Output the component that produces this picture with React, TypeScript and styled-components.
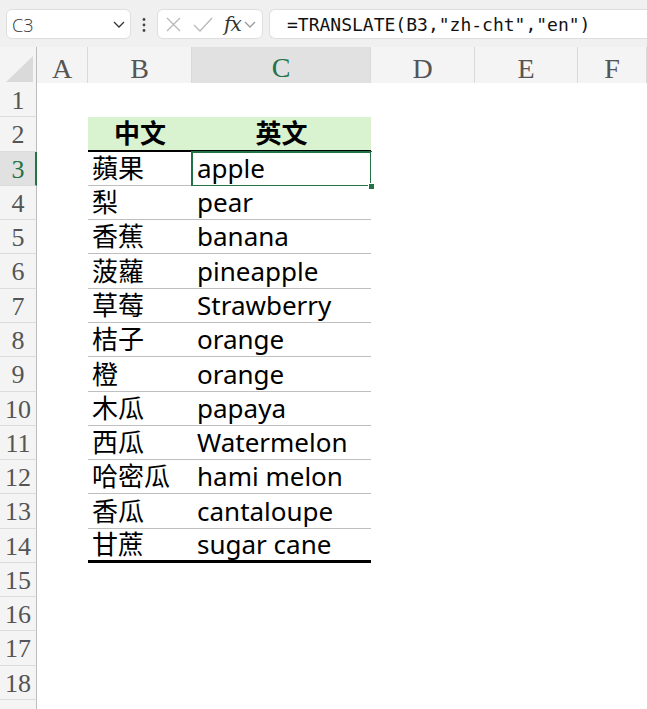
import React from "react";
import styled, { createGlobalStyle, css } from "styled-components";

const Global = createGlobalStyle`
  html, body { margin: 0; padding: 0; background: #ffffff; }
  body { overflow: hidden; }
`;

const GREEN = "#217346";
const COLS = ["37px", "51px", "104px", "179px", "104px", "103px", "69px"].join(" ");

const Page = styled.div`
  width: 647px;
  height: 709px;
  overflow: hidden;
  background: #ffffff;
  display: flex;
  flex-direction: column;
`;

const FormulaBar = styled.div`
  height: 47px;
  flex: none;
  box-sizing: border-box;
  background: #f0f0f0;
  padding: 9px 0 8px 6px;
  display: flex;
  align-items: stretch;
`;

const Box = styled.div`
  box-sizing: border-box;
  height: 30px;
  background: #ffffff;
  border: 1px solid #dedede;
  border-radius: 6px;
  display: flex;
  align-items: center;
`;

const NameBox = styled(Box)`
  width: 125px;
  padding: 1px 5px 0 5px;
  justify-content: space-between;
  font-family: "Open Sans", "Noto Sans", sans-serif;
  font-weight: 300;
  font-size: 18px;
  color: #333333;
`;

const Kebab = styled.div`
  width: 26px;
  display: flex;
  align-items: center;
  justify-content: center;
  padding-top: 2px;
`;

const FnBox = styled(Box)`
  width: 106px;
  padding: 0 4px 0 8px;
  gap: 12px;
`;

const Fx = styled.span`
  font-family: "DejaVu Serif", "Liberation Serif", serif;
  font-style: italic;
  font-size: 20px;
  color: #333333;
  margin-left: -1px;
  letter-spacing: -1px;
`;

const FxChevron = styled.span`
  margin-left: -9px;
  display: flex;
`;

const FormulaInput = styled(Box)`
  flex: 1;
  margin-left: 6px;
  border-right: none;
  border-top-right-radius: 0;
  border-bottom-right-radius: 0;
  padding-left: 17px;
  font-family: "DejaVu Sans Mono", "Liberation Mono", monospace;
  font-size: 18px;
  color: #111111;
  white-space: nowrap;
`;

const Sheet = styled.div`
  display: flex;
  flex-direction: column;
`;

const GridRow = styled.div<{ $h: number }>`
  display: grid;
  grid-template-columns: ${COLS};
  height: ${(p) => p.$h}px;
  flex: none;
`;

const headerText = css`
  font-family: "Liberation Serif", "DejaVu Serif", serif;
  color: #555555;
`;

const Corner = styled.div`
  box-sizing: border-box;
  background: #f4f4f4;
  border-right: 1px solid #bdbdbd;
  border-bottom: 1px solid #bdbdbd;
  display: flex;
  align-items: flex-end;
  justify-content: flex-end;
  padding: 0 3px 3px 0;
`;

const ColHeader = styled.div<{ $active?: boolean }>`
  ${headerText};
  box-sizing: border-box;
  font-size: 28px;
  background: ${(p) => (p.$active ? "#e1e1e1" : "#f4f4f4")};
  color: ${(p) => (p.$active ? GREEN : "#555555")};
  border-right: 1px solid #d9d9d9;
  border-bottom: ${(p) => (p.$active ? `2px solid ${GREEN}` : "1px solid #bdbdbd")};
  display: flex;
  align-items: center;
  justify-content: center;
  padding-top: ${(p) => (p.$active ? "5px" : "6px")};
  &:last-child { border-right: none; }
`;

const RowHeader = styled.div<{ $active?: boolean }>`
  ${headerText};
  box-sizing: border-box;
  font-size: 26px;
  background: ${(p) => (p.$active ? "#e1e1e1" : "#f4f4f4")};
  color: ${(p) => (p.$active ? GREEN : "#555555")};
  border-right: ${(p) => (p.$active ? `2px solid ${GREEN}` : "1px solid #bdbdbd")};
  border-bottom: 1px solid #dcdcdc;
  display: flex;
  align-items: center;
  justify-content: center;
  padding-left: ${(p) => (p.$active ? "1px" : "0")};
  padding-top: 2px;
`;

type Edge = "none" | "thin" | "head" | "end";
const edges: Record<Edge, string> = {
  none: "none",
  thin: "1px solid #bfbfbf",
  head: "2px solid #000000",
  end: "3px solid #000000",
};

const Cell = styled.div<{ $edge?: Edge; $head?: boolean; $selected?: boolean; $pad?: number }>`
  position: relative;
  box-sizing: border-box;
  min-width: 0;
  background: ${(p) => (p.$head ? "#d9f2d0" : "#ffffff")};
  border-bottom: ${(p) => edges[p.$edge ?? "none"]};
  font-family: "Noto Sans", "Noto Sans CJK TC", sans-serif;
  font-size: 26px;
  font-weight: ${(p) => (p.$head ? 700 : 400)};
  color: #000000;
  white-space: nowrap;
  display: flex;
  align-items: center;
  justify-content: ${(p) => (p.$head ? "center" : "flex-start")};
  padding-left: ${(p) => (p.$head ? 0 : p.$pad ?? 4)}px;
  padding-bottom: 1px;
  line-height: 1;
  ${(p) =>
    p.$selected &&
    css`
      &::after {
        content: "";
        position: absolute;
        left: -1px;
        right: -1px;
        top: -1px;
        bottom: -2px;
        border: 2px solid ${GREEN};
        pointer-events: none;
      }
      &::before {
        content: "";
        position: absolute;
        right: -4px;
        bottom: -5px;
        width: 5px;
        height: 5px;
        background: ${GREEN};
        border: 1px solid #ffffff;
        z-index: 2;
      }
    `}
`;

const Chevron = ({ color = "#333" }: { color?: string }) => (
  <svg width="12" height="7" viewBox="0 0 12 7">
    <polyline points="1,1 6,6 11,1" fill="none" stroke={color} strokeWidth="1.3" />
  </svg>
);

const columns = ["A", "B", "C", "D", "E", "F", ""];

const data: [string, string][] = [
  ["蘋果", "apple"],
  ["梨", "pear"],
  ["香蕉", "banana"],
  ["菠蘿", "pineapple"],
  ["草莓", "Strawberry"],
  ["桔子", "orange"],
  ["橙", "orange"],
  ["木瓜", "papaya"],
  ["西瓜", "Watermelon"],
  ["哈密瓜", "hami melon"],
  ["香瓜", "cantaloupe"],
  ["甘蔗", "sugar cane"],
];

const boundary = (i: number) => Math.round(83 + 34.28 * i);

export default function App() {
  const rows = Array.from({ length: 19 }, (_, k) => k + 1);
  return (
    <>
      <Global />
      <Page>
        <FormulaBar>
          <NameBox>
            <span>C3</span>
            <Chevron />
          </NameBox>
          <Kebab>
            <svg width="4" height="16" viewBox="0 0 4 16">
              <circle cx="2" cy="2.5" r="1.4" fill="#444" />
              <circle cx="2" cy="8" r="1.4" fill="#444" />
              <circle cx="2" cy="13.5" r="1.4" fill="#444" />
            </svg>
          </Kebab>
          <FnBox>
            <svg width="15" height="15" viewBox="0 0 15 15">
              <path d="M1 1 L14 14 M14 1 L1 14" stroke="#b8b8b8" strokeWidth="1.3" fill="none" />
            </svg>
            <svg width="20" height="15" viewBox="0 0 20 15">
              <polyline points="1,8 7,14 19,1" stroke="#b8b8b8" strokeWidth="1.3" fill="none" />
            </svg>
            <Fx>fx</Fx>
            <FxChevron>
              <Chevron color="#999" />
            </FxChevron>
          </FnBox>
          <FormulaInput>=TRANSLATE(B3,"zh-cht","en")</FormulaInput>
        </FormulaBar>
        <Sheet>
          <GridRow $h={36}>
            <Corner>
              <svg width="27" height="26" viewBox="0 0 27 26">
                <polygon points="27,0 27,26 0,26" fill="#dadada" />
              </svg>
            </Corner>
            {columns.map((c, i) => (
              <ColHeader key={i} $active={c === "C"}>
                {c}
              </ColHeader>
            ))}
          </GridRow>
          {rows.map((r) => {
            const h = boundary(r) - boundary(r - 1);
            const isHead = r === 2;
            const item = r >= 3 && r <= 14 ? data[r - 3] : null;
            const edge: Edge = isHead ? "head" : r === 14 ? "end" : item ? "thin" : "none";
            const inTable = isHead || !!item;
            return (
              <GridRow key={r} $h={h}>
                <RowHeader $active={r === 3}>{r <= 18 ? r : ""}</RowHeader>
                <Cell />
                <Cell $edge={inTable ? edge : "none"} $head={isHead}>
                  {isHead ? "中文" : item?.[0]}
                </Cell>
                <Cell $edge={inTable ? edge : "none"} $head={isHead} $selected={r === 3} $pad={5}>
                  {isHead ? "英文" : item?.[1]}
                </Cell>
                <Cell />
                <Cell />
                <Cell />
              </GridRow>
            );
          })}
        </Sheet>
      </Page>
    </>
  );
}
